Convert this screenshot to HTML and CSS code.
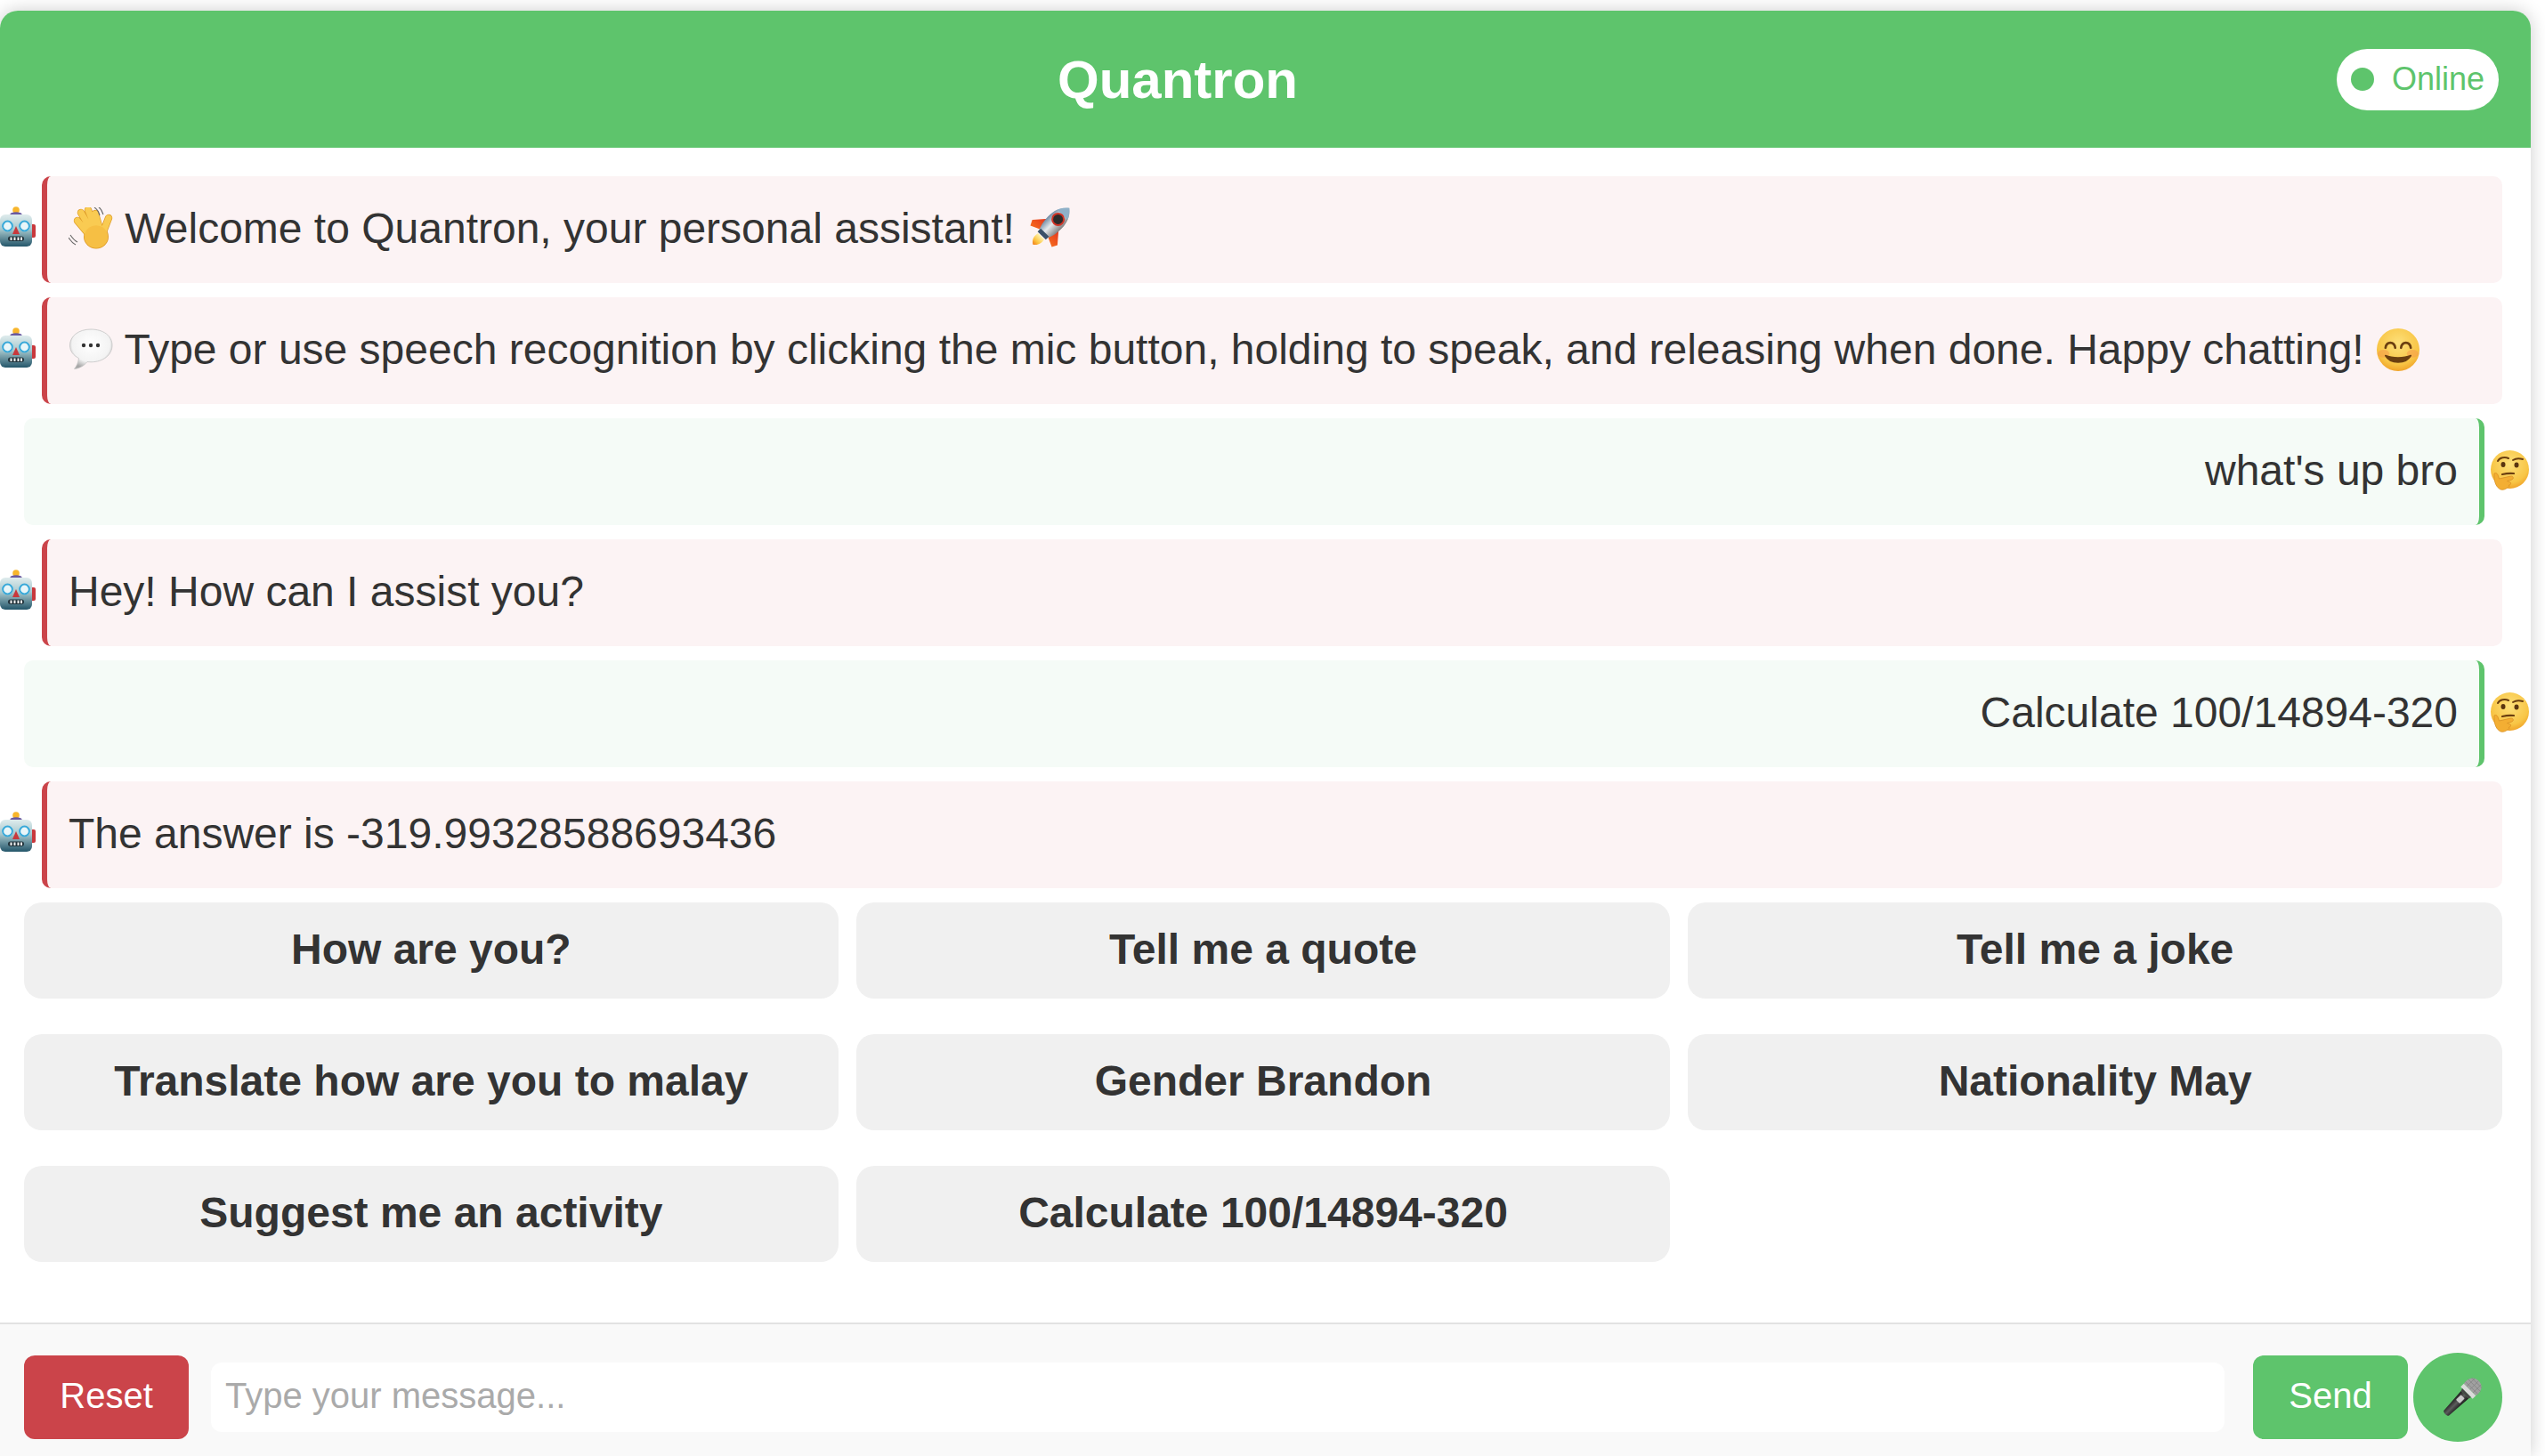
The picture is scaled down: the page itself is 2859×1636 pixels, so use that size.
FILE: index.html
```html
<!DOCTYPE html>
<html lang="en">
<head>
  <meta charset="UTF-8">
  <title>Quantron</title>
  <meta name="viewport" content="width=device-width, initial-scale=1">
  <link rel="stylesheet" href="styles.css">
</head>
<body>
  <!-- emoji drawn once here, used through <use> below -->
  <svg class="sprites" aria-hidden="true">
    <defs>
      <linearGradient id="gHead" x1="0" y1="0" x2="0" y2="1">
        <stop offset="0" stop-color="#dfeced"/><stop offset=".45" stop-color="#a9c9ce"/><stop offset="1" stop-color="#24566a"/>
      </linearGradient>
      <radialGradient id="gFace" cx=".5" cy=".35" r=".7">
        <stop offset="0" stop-color="#fde07a"/><stop offset=".7" stop-color="#f8c545"/><stop offset="1" stop-color="#ee9a22"/>
      </radialGradient>
      <radialGradient id="gBubble" cx=".5" cy=".38" r=".62">
        <stop offset="0" stop-color="#ffffff"/><stop offset=".72" stop-color="#f3f3f3"/><stop offset="1" stop-color="#a6a6a6"/>
      </radialGradient>
      <linearGradient id="gBody" x1="0" y1="0" x2="1" y2="0">
        <stop offset="0" stop-color="#6f8aa3"/><stop offset=".45" stop-color="#e6eaec"/><stop offset="1" stop-color="#7f7f7f"/>
      </linearGradient>
      <linearGradient id="gFlame" x1="0" y1="0" x2="0" y2="1">
        <stop offset="0" stop-color="#fff3b0"/><stop offset=".6" stop-color="#fcc23c"/><stop offset="1" stop-color="#f07a1c"/>
      </linearGradient>
      <linearGradient id="gFin" x1="0" y1="0" x2="0" y2="1">
        <stop offset="0" stop-color="#e2301e"/><stop offset="1" stop-color="#f56a1e"/>
      </linearGradient>
      <linearGradient id="gHandle" x1="0" y1="0" x2="1" y2="0">
        <stop offset="0" stop-color="#1c1c1c"/><stop offset=".5" stop-color="#5c5c5c"/><stop offset="1" stop-color="#1a1a1a"/>
      </linearGradient>
    </defs>

    <symbol id="robot" viewBox="0 0 40 45">
      <rect x="34" y="20" width="6" height="15" rx="2" fill="#c8383c"/>
      <circle cx="18" cy="4" r="3.8" fill="#f8b62c"/>
      <ellipse cx="18" cy="8.6" rx="6.6" ry="2.4" fill="#6a5aa0"/>
      <rect x="0" y="9" width="36" height="36" rx="6" fill="url(#gHead)"/>
      <circle cx="8.5" cy="22" r="6.2" fill="#e8f6f9"/>
      <circle cx="8.5" cy="22" r="5.4" fill="none" stroke="#38a8d8" stroke-width="2"/>
      <circle cx="27.5" cy="22" r="6.2" fill="#e8f6f9"/>
      <circle cx="27.5" cy="22" r="5.4" fill="none" stroke="#38a8d8" stroke-width="2"/>
      <path d="M18 22l4 9h-8z" fill="#c8383c"/>
      <rect x="9" y="33.5" width="18" height="5.5" rx="2.7" fill="#22343c"/>
      <path d="M12.5 34.5v3.5M16.500 34.500v3.500M20.500 34.500v3.500M24 34.500v3.500" stroke="#f2f2f2" stroke-width="2"/>
    </symbol>

    <symbol id="wave" viewBox="0 0 50 48">
      <path d="M10 15L26 34M14 6L28 30M22 3L32 28M30 7L36 28M45 12L38 30" fill="none" stroke="#dd9a28" stroke-width="8.400" stroke-linecap="round"/>
      <ellipse cx="31" cy="33" rx="14" ry="13.500" fill="#dd9a28"/>
      <path d="M10 15L26 34M14 6L28 30M22 3L32 28M30 7L36 28M45 12L38 30" fill="none" stroke="#f9cb52" stroke-width="7" stroke-linecap="round"/>
      <ellipse cx="31" cy="33" rx="13.200" ry="12.700" fill="#f6bf44"/>
      <path d="M29 0c3 2 5 5 6 9M33-1c3 2 5 5 6 9M2 31c2 3 4 6 8 8M0 34c2 3 4 6 8 8" fill="none" stroke="#666" stroke-width="1.100"/>
    </symbol>

    <symbol id="speech" viewBox="0 0 50 48">
      <path d="M25 1C11 1 1.500 9 1.500 19c0 6.500 4 11.500 10 14.500-.5 5-2.500 9-5 12 5.500-.5 11-3.500 14.500-8 1.300.2 2.700.3 4 .3 14 0 24-8 24-18.800S39 1 25 1z" fill="url(#gBubble)" stroke="#c4c4c4" stroke-width=".8"/>
      <circle cx="17" cy="19" r="2.200" fill="#333"/>
      <circle cx="25" cy="19" r="2.200" fill="#333"/>
      <circle cx="33" cy="19" r="2.200" fill="#333"/>
    </symbol>

    <symbol id="rocket" viewBox="0 0 48 48">
      <g transform="rotate(45 24 24)">
        <path d="M24 49c-5-3-6-8-5-13h10c1 5 0 10-5 13z" fill="url(#gFlame)"/>
        <path d="M16 16L4 30l3 6 11-5zM32 16l12 14-3 6-11-5z" fill="url(#gFin)"/>
        <path d="M24-9c9 7 11 17 10 28-.4 6-2.500 11-4 15H18c-1.500-4-3.600-9-4-15C13 8 15-2 24-9z" fill="url(#gBody)"/>
        <path d="M24-9c4 3.500 6.500 7 8 11H16c1.500-4 4-7.500 8-11z" fill="#8fb0c8"/>
        <circle cx="24" cy="9" r="6.500" fill="#2b2b2b" stroke="#cf3326" stroke-width="2"/>
        <rect x="17.500" y="30" width="13" height="5" fill="#3a5168"/>
      </g>
    </symbol>

    <symbol id="smile" viewBox="0 0 44 44">
      <circle cx="22" cy="22" r="22" fill="url(#gFace)"/>
      <ellipse cx="7" cy="26" rx="6" ry="4" fill="#f59a4a" opacity=".55"/>
      <ellipse cx="37" cy="26" rx="6" ry="4" fill="#f59a4a" opacity=".55"/>
      <path d="M9 20c1-7 9-7 10 0M25 20c1-7 9-7 10 0" fill="none" stroke="#6b3f10" stroke-width="2.400" stroke-linecap="round"/>
      <path d="M9 28c5 9 21 9 26 0-7 3-19 3-26 0z" fill="#6b3f10" stroke="#6b3f10" stroke-width="1.600" stroke-linejoin="round"/>
    </symbol>

    <symbol id="think" viewBox="0 0 44 45">
      <circle cx="22.500" cy="21.500" r="21.500" fill="url(#gFace)"/>
      <path d="M9 12c2-4 8-5 12-3M26 11c3-2 8-2 11-1" fill="none" stroke="#6b3f10" stroke-width="2" stroke-linecap="round"/>
      <ellipse cx="15" cy="16" rx="2.500" ry="3" fill="#5a3510"/>
      <ellipse cx="30" cy="16.500" rx="2.500" ry="3" fill="#5a3510"/>
      <path d="M14 27c4-1 9-1.500 13-1" fill="none" stroke="#6b3f10" stroke-width="2.200" stroke-linecap="round"/>
      <path d="M5 26c2-1.500 4 .5 4.500 3l1 3 13-3c3-.5 4 3 1 4l-5 1.500 3 1c2 1 1 3.500-1 3.500 1 2-1 3-2 3-2 2.500-7 3-9 1-4-3-6-9-5.500-17z" fill="#f3ae33" stroke="#d98f24" stroke-width=".8"/>
    </symbol>

    <symbol id="mic" viewBox="0 0 44 44">
      <g transform="rotate(45 22 22)">
        <path d="M16 18h12l-2 29c0 2.500-8 2.500-8 0z" fill="url(#gHandle)"/>
        <rect x="19" y="21" width="6" height="8" rx="1" fill="#c9c9c9"/>
        <path d="M12.500 10C11 1 15-4 22-4s11 5 9.500 14z" fill="#a0a0a0"/>
        <path d="M22-4v14M17-3v13M27-3v13M12-1h20M12 3h20M12 7h20" stroke="#828282" stroke-width=".7"/>
        <rect x="12.500" y="10" width="19" height="5" fill="#dadada"/>
        <path d="M15 15h14l-1 3H16z" fill="#444"/>
      </g>
    </symbol>
  </svg>

  <div class="chat">
    <header class="chat-header">
      <h1 class="chat-title">Quantron</h1>
      <div class="status"><span class="status-dot"></span>Online</div>
    </header>

    <main class="chat-body">
      <div class="msg bot">
        <svg class="avatar-bot"><use href="#robot"/></svg>
        <div class="bubble"><svg class="emoji"><use href="#wave"/></svg> Welcome to Quantron, your personal assistant! <svg class="emoji"><use href="#rocket"/></svg></div>
      </div>
      <div class="msg bot">
        <svg class="avatar-bot"><use href="#robot"/></svg>
        <div class="bubble"><svg class="emoji"><use href="#speech"/></svg> Type or use speech recognition by clicking the mic button, holding to speak, and releasing when done. Happy chatting! <svg class="emoji"><use href="#smile"/></svg></div>
      </div>
      <div class="msg user">
        <div class="bubble">what's up bro</div>
        <svg class="avatar-user"><use href="#think"/></svg>
      </div>
      <div class="msg bot">
        <svg class="avatar-bot"><use href="#robot"/></svg>
        <div class="bubble">Hey! How can I assist you?</div>
      </div>
      <div class="msg user">
        <div class="bubble">Calculate 100/14894-320</div>
        <svg class="avatar-user"><use href="#think"/></svg>
      </div>
      <div class="msg bot">
        <svg class="avatar-bot"><use href="#robot"/></svg>
        <div class="bubble">The answer is -319.99328588693436</div>
      </div>

      <div class="suggestions">
        <button class="suggestion">How are you?</button>
        <button class="suggestion">Tell me a quote</button>
        <button class="suggestion">Tell me a joke</button>
        <button class="suggestion">Translate how are you to malay</button>
        <button class="suggestion">Gender Brandon</button>
        <button class="suggestion">Nationality May</button>
        <button class="suggestion">Suggest me an activity</button>
        <button class="suggestion">Calculate 100/14894-320</button>
      </div>
    </main>

    <footer class="chat-input">
      <button class="btn btn-reset">Reset</button>
      <input class="message-input" type="text" placeholder="Type your message...">
      <button class="btn btn-send">Send</button>
      <button class="btn-mic" aria-label="Hold to speak"><svg class="mic-icon"><use href="#mic"/></svg></button>
    </footer>
  </div>
</body>
</html>
```

FILE: styles.css
```css
* {
  box-sizing: border-box;
}
html, body {
  height: 100%;
  margin: 0;
  overflow: hidden;
}
body {
  font-family: "Liberation Sans", Arial, sans-serif;
  background-color: #fff;
  color: #333;
  padding: 12px 16px 0 0;
}
.sprites {
  width: 0;
  height: 0;
  display: block;
}
.chat {
  height: 100%;
  display: flex;
  flex-direction: column;
  background-color: #fff;
  border-radius: 20px 20px 0 0;
  box-shadow: 0 0 20px rgba(0, 0, 0, 0.2);
}
.chat-header {
  height: 154px;
  flex: none;
  display: flex;
  align-items: center;
  padding: 0 36px;
  background-color: #5ec46c;
  color: #fff;
  border-radius: 20px 20px 0 0;
}
.chat-title {
  flex: 1;
  margin: 0 15px 0 0;
  font-size: 60px;
  font-weight: bold;
  text-align: center;
}
.status {
  height: 69px;
  width: 182px;
  display: flex;
  align-items: center;
  gap: 20px;
  padding-left: 16px;
  background-color: #fff;
  color: #5ec46c;
  border-radius: 35px;
  font-size: 36px;
}
.status-dot {
  width: 26px;
  height: 26px;
  border-radius: 50%;
  background-color: #5ec46c;
}
.chat-body {
  flex: 1;
  padding-top: 32px;
}
.msg {
  display: flex;
  align-items: center;
  margin-bottom: 16px;
}
.msg.bot {
  margin-right: 32px;
}
.msg.user {
  margin-left: 27px;
  margin-right: 2px;
}
.avatar-bot {
  width: 40px;
  height: 45px;
  flex: none;
  margin: 0 7px 7px 0;
}
.avatar-user {
  width: 44px;
  height: 45px;
  flex: none;
  margin: 0 0 4px 6px;
}
.bubble {
  flex: 1;
  height: 120px;
  padding: 31px 24px;
  font-size: 48px;
  line-height: 56px;
  white-space: nowrap;
  border-radius: 10px;
}
.bot .bubble {
  background-color: #fcf3f4;
  border-left: 6px solid #cb444a;
}
.user .bubble {
  background-color: #f5fbf7;
  border-right: 6px solid #5ec46c;
  text-align: right;
}
.emoji {
  width: 50px;
  height: 48px;
  vertical-align: -8px;
  overflow: visible;
}
.suggestions {
  display: grid;
  grid-template-columns: repeat(3, 1fr);
  column-gap: 20px;
  row-gap: 40px;
  margin: 0 32px 0 27px;
}
.suggestion {
  height: 108px;
  padding: 0 0 3px;
  border: none;
  border-radius: 20px;
  background-color: #f0f0f0;
  color: #333;
  font-family: inherit;
  font-size: 48px;
  font-weight: bold;
}
.chat-input {
  flex: none;
  height: 150px;
  display: flex;
  align-items: center;
  padding: 32px 32px 16px 27px;
  background-color: #f9f9f9;
  border-top: 2px solid #e2e2e2;
}
.btn {
  height: 94px;
  padding: 0 0 3px;
  border: none;
  border-radius: 12px;
  color: #fff;
  font-family: inherit;
  font-size: 40px;
}
.btn-reset {
  width: 185px;
  background-color: #cb444a;
}
.btn-send {
  width: 174px;
  background-color: #5ec46c;
}
.message-input {
  flex: 1;
  height: 78px;
  margin: 0 32px 0 25px;
  padding: 0 16px 3px;
  border: none;
  border-radius: 12px;
  background-color: #fff;
  font-family: inherit;
  font-size: 40px;
}
.message-input::placeholder {
  color: #aaa;
}
.btn-mic {
  width: 100px;
  height: 100px;
  flex: none;
  margin-left: 6px;
  padding: 0 0 0 10px;
  border: none;
  border-radius: 50%;
  background-color: #5ec46c;
}
.mic-icon {
  width: 44px;
  height: 44px;
  display: block;
  margin: auto;
  overflow: visible;
}
```
